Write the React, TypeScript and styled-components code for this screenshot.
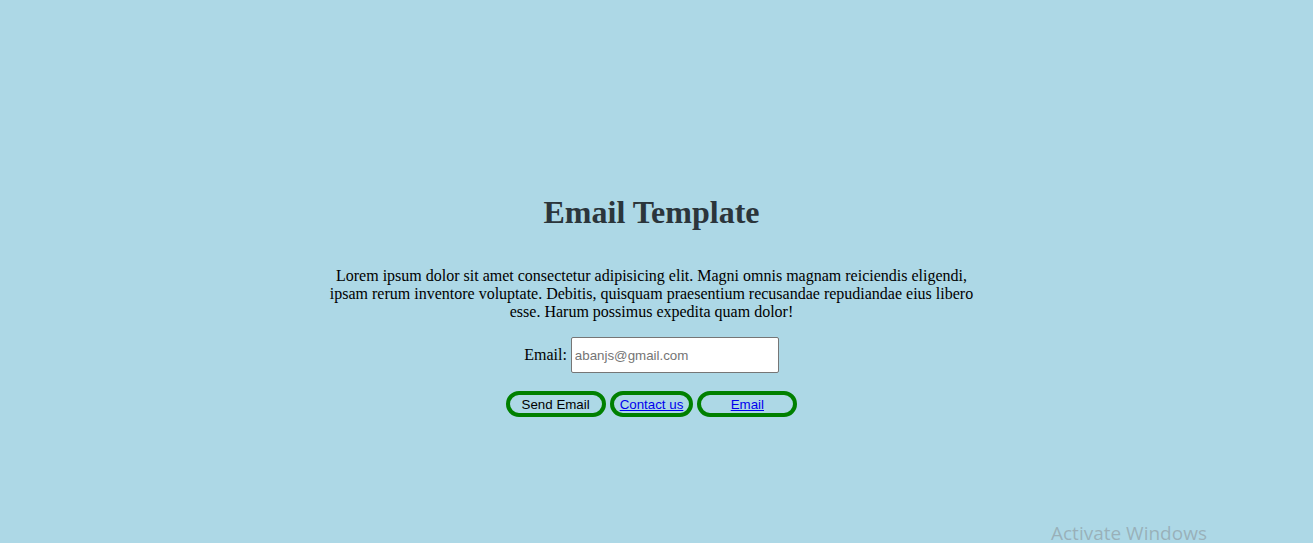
import React from "react";
import styled, { createGlobalStyle } from "styled-components";

const GlobalStyle = createGlobalStyle`
  html, body {
    margin: 0;
    padding: 0;
    background: lightblue;
    height: 100%;
    overflow: hidden;
  }
  body {
    font-family: "Liberation Serif", "Times New Roman", serif;
    font-size: 16px;
    color: #000;
  }
`;

const Page = styled.main`
  position: relative;
  height: 543px;
  display: flex;
  flex-direction: column;
  align-items: center;
  padding: 194px 10px 0 0;
  box-sizing: border-box;
`;

const Title = styled.h1`
  margin: 0;
  font-family: "Liberation Serif", "Times New Roman", serif;
  font-size: 32px;
  font-weight: bold;
  color: #2b353b;
  line-height: 37px;
`;

const Text = styled.p`
  width: 650px;
  margin: 36px 0 0;
  text-align: center;
  font-size: 16px;
  line-height: 18px;
`;

const FormRow = styled.div`
  display: flex;
  align-items: center;
  gap: 4px;
  margin-top: 16px;
`;

const Label = styled.label`
  font-size: 16px;
`;

const Input = styled.input`
  width: 208px;
  height: 36px;
  box-sizing: border-box;
  border: 1px solid #767676;
  border-radius: 2px;
  padding: 1px 3px;
  font-family: "Liberation Sans", Arial, sans-serif;
  font-size: 13.33px;
  background: #fff;
  &::placeholder {
    color: #757575;
  }
`;

const ButtonRow = styled.div`
  display: flex;
  gap: 4px;
  margin-top: 18px;
`;

const PillButton = styled.button<{ $width?: number }>`
  ${(p) => (p.$width ? `width: ${p.$width}px;` : "")}
  height: 26px;
  box-sizing: border-box;
  padding: 1px 6px;
  border: 4px solid green;
  border-radius: 20px;
  background: transparent;
  font-family: "Liberation Sans", Arial, sans-serif;
  font-size: 13.33px;
  color: #000;
  cursor: pointer;
  display: inline-flex;
  align-items: center;
  justify-content: center;
`;

const Link = styled.a`
  color: #0000ee;
  text-decoration: underline;
`;

const Watermark = styled.div`
  position: absolute;
  left: 1051px;
  top: 520px;
  font-family: "Open Sans", "Noto Sans", sans-serif;
  font-size: 19px;
  color: rgba(140, 150, 155, 0.6);
  white-space: nowrap;
  pointer-events: none;
`;

export default function App() {
  return (
    <>
      <GlobalStyle />
      <Page>
        <Title>Email Template</Title>
        <Text>
          Lorem ipsum dolor sit amet consectetur adipisicing elit. Magni omnis
          magnam reiciendis eligendi, ipsam rerum inventore voluptate. Debitis,
          quisquam praesentium recusandae repudiandae eius libero esse. Harum
          possimus expedita quam dolor!
        </Text>
        <FormRow>
          <Label htmlFor="email">Email:</Label>
          <Input id="email" type="email" placeholder="abanjs@gmail.com" />
        </FormRow>
        <ButtonRow>
          <PillButton $width={100}>Send Email</PillButton>
          <PillButton>
            <Link href="#">Contact us</Link>
          </PillButton>
          <PillButton $width={100}>
            <Link href="#">Email</Link>
          </PillButton>
        </ButtonRow>
        <Watermark>Activate Windows</Watermark>
      </Page>
    </>
  );
}
